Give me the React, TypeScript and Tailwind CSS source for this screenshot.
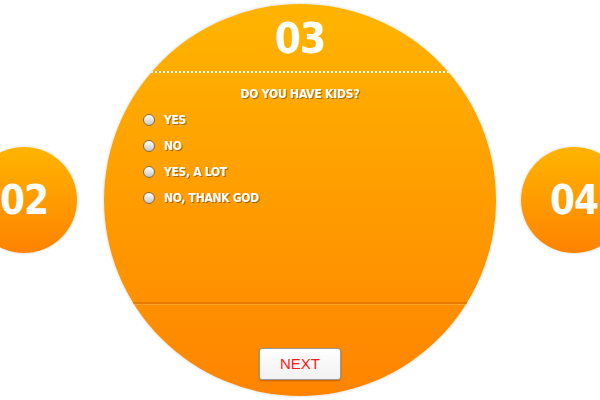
import { useState } from 'react';

const options = ['YES', 'NO', 'YES, A LOT', 'NO, THANK GOD'];

const din = "font-['DejaVu_Sans_Condensed','DejaVu_Sans',sans-serif] font-bold";

const SideStep = ({ n, className }: { n: string; className: string }) => (
  <div
    className={`shrink-0 w-[106px] h-[106px] rounded-full bg-gradient-to-b from-[#ffb400] to-[#ff8200] shadow-[0_0_3px_rgba(0,0,0,0.2)] flex items-center justify-center text-white text-[40px] leading-none tracking-[-1px] ${din} ${className}`}
  >
    {n}
  </div>
);

export default function App() {
  const [picked, setPicked] = useState<number | null>(null);

  return (
    <div className="w-[600px] h-[400px] overflow-hidden bg-white flex items-center">
      <SideStep n="02" className="ml-[-29px]" />

      {/* Current question */}
      <div className="shrink-0 ml-[27px] w-[392px] h-[392px] rounded-full overflow-hidden bg-gradient-to-b from-[#ffb400] to-[#ff8400] shadow-[0_0_3px_rgba(0,0,0,0.2)] flex flex-col">
        <div className={`h-[67px] flex items-center justify-center pt-[3px] text-white text-[42px] leading-none tracking-[-1px] ${din}`}>
          03
        </div>
        <div className="border-t-2 border-dotted border-white" />

        <div className={`pt-[13px] text-center text-white text-[12px] leading-[16px] tracking-[-0.2px] [text-shadow:1px_1px_0_rgba(90,50,0,0.55)] ${din}`}>
          DO YOU HAVE KIDS?
        </div>

        <ul className="mt-[5px] pl-[39px] flex flex-col">
          {options.map((o, i) => (
            <li key={o} className="h-[26px] flex items-center gap-[9px] cursor-pointer" onClick={() => setPicked(i)}>
              <span className="w-[12px] h-[12px] rounded-full border border-[#8a6a3a] bg-gradient-to-b from-white to-[#c8c8c8] flex items-center justify-center">
                {picked === i && <span className="w-[5px] h-[5px] rounded-full bg-[#555]" />}
              </span>
              <span className={`text-white text-[12px] leading-none tracking-[-0.3px] [text-shadow:1px_1px_0_rgba(90,50,0,0.55)] ${din}`}>{o}</span>
            </li>
          ))}
        </ul>

        <div className="mt-auto mb-[44px] h-[2px] bg-[#e87a00] shadow-[0_1px_0_rgba(255,200,120,0.35)]" />

        <div className="mb-[16px] flex justify-center">
          <button className="w-[82px] h-[32px] rounded-[3px] border border-[#9a9a9a] bg-gradient-to-b from-white to-[#f1f1f1] text-[#ff1a1a] text-[15px] font-['Liberation_Sans',Arial,sans-serif] shadow-[0_1px_2px_rgba(0,0,0,0.25)]">
            NEXT
          </button>
        </div>
      </div>

      <SideStep n="04" className="ml-[25px]" />
    </div>
  );
}
